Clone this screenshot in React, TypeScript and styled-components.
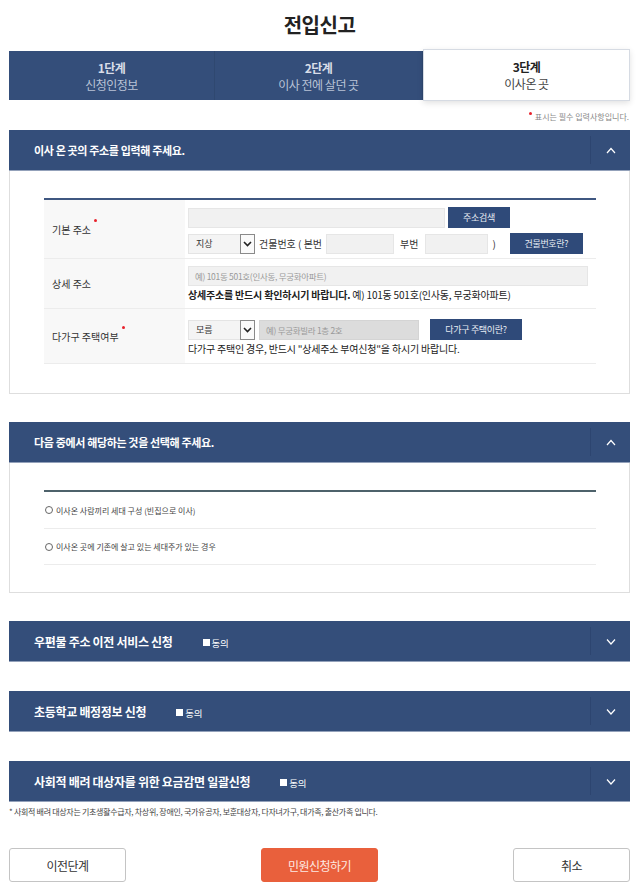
import styled, { createGlobalStyle } from 'styled-components';

const navy = '#344e7a';
const buttonNavy = '#2f4a79';

const GlobalStyle = createGlobalStyle`
  html, body {
    margin: 0;
    padding: 0;
    background: #fff;
  }
  body {
    font-family: 'Noto Sans CJK KR', 'Noto Sans', sans-serif;
    color: #222;
  }
  * {
    box-sizing: border-box;
  }
`;

const Page = styled.div`
  width: 640px;
  padding: 0 10px 0 9px;
`;

const Title = styled.h1`
  margin: 0;
  padding-top: 11px;
  height: 49px;
  text-align: center;
  font-size: 20px;
  line-height: 28px;
  font-weight: 700;
  letter-spacing: -0.5px;
  color: #222;
`;

const Steps = styled.div`
  display: grid;
  grid-template-columns: 206px 208px 1fr;
  height: 52px;
`;

const Step = styled.div<{ $active?: boolean }>`
  display: flex;
  flex-direction: column;
  align-items: center;
  justify-content: center;
  margin: ${(p) => (p.$active ? '0' : '2px 0 1px')};
  background: ${(p) => (p.$active ? '#fff' : navy)};
  border: ${(p) => (p.$active ? '1px solid #d6dbe3' : 'none')};
  border-right: ${(p) => (p.$active ? '1px solid #d6dbe3' : '1px solid #2f4870')};
  box-shadow: ${(p) => (p.$active ? '0 2px 6px rgba(0,0,0,0.12)' : 'none')};
  letter-spacing: -0.5px;
  line-height: 17px;

  strong {
    font-size: 12px;
    font-weight: 700;
    color: ${(p) => (p.$active ? '#222' : '#d8dde8')};
  }
  span {
    font-size: 12px;
    color: ${(p) => (p.$active ? '#444' : '#b9c3d6')};
  }
`;

const RequiredNote = styled.div`
  height: 29px;
  padding-top: 10px;
  text-align: right;
  font-size: 8px;
  line-height: 12px;
  color: #888;
  padding-right: 1px;
`;

const Dot = styled.i`
  display: inline-block;
  width: 3px;
  height: 3px;
  border-radius: 50%;
  background: #e8212b;
  vertical-align: top;
  margin: 1px 3px 0 0;
`;

const LabelDot = styled(Dot)`
  position: relative;
  top: -3px;
  margin: 0 0 0 3px;
`;

const Section = styled.section<{ $gap?: number }>`
  margin-bottom: ${(p) => (p.$gap ?? 28) + 'px'};
`;

const Header = styled.div`
  display: flex;
  align-items: center;
  height: 41px;
  background: ${navy};
  border-bottom: 1px solid #93a1ba;
  padding-left: 25px;
  color: #fff;
`;

// open panels use a slightly smaller title than the collapsed ones
const HeaderTitle = styled.h2<{ $open?: boolean }>`
  flex: 1;
  margin: 0;
  font-size: ${(p) => (p.$open ? '11px' : '12px')};
  font-weight: 700;
  letter-spacing: ${(p) => (p.$open ? '-0.35px' : '-0.3px')};
  display: flex;
  align-items: center;
`;

const Agree = styled.span`
  margin-left: 30px;
  font-size: 9.5px;
  font-weight: 400;
  letter-spacing: -0.3px;
  display: inline-flex;
  align-items: center;
  margin-top: 3px;

  &:before {
    content: '';
    width: 7px;
    height: 7px;
    background: #fff;
    margin-right: 2px;
  }
`;

const Toggle = styled.div`
  width: 40px;
  height: 28px;
  border-left: 1px solid #2d4570;
  display: flex;
  align-items: center;
  justify-content: center;
`;

const Body = styled.div<{ $pad: string }>`
  border: 1px solid #dedede;
  border-top: none;
  padding: ${(p) => p.$pad};
`;

const Table = styled.div<{ $line: string }>`
  border-top: 2px solid ${(p) => p.$line};
`;

const Row = styled.div<{ $h: number }>`
  display: grid;
  grid-template-columns: 141px 1fr;
  min-height: ${(p) => p.$h + 'px'};
  border-bottom: 1px solid #ececec;
`;

const Label = styled.div`
  background: #f8f8f8;
  display: flex;
  align-items: center;
  padding-left: 8px;
  font-size: 10px;
  color: #333;
`;

const Cell = styled.div<{ $pt: number }>`
  padding: ${(p) => p.$pt + 'px'} 0 0 3px;
  display: flex;
  flex-direction: column;
  gap: 5px;
`;

const Line = styled.div`
  display: flex;
  align-items: center;
  gap: 4px;
  font-size: 10px;
  color: #333;
`;

const Input = styled.div<{ $w: number; $dark?: boolean }>`
  width: ${(p) => p.$w + 'px'};
  height: 20px;
  background: ${(p) => (p.$dark ? '#dcdcdc' : '#f1f1f1')};
  border: 1px solid ${(p) => (p.$dark ? '#d4d4d4' : '#e6e6e6')};
  font-size: 8.5px;
  color: #999;
  padding-left: 6px;
  display: flex;
  align-items: center;
  letter-spacing: -0.3px;
`;

const Select = styled.div`
  width: 67px;
  height: 20px;
  background: #f4f4f4;
  border: 1px solid #e4e4e4;
  display: flex;
  align-items: center;
  justify-content: space-between;
  font-size: 9px;
  color: #333;
  padding-left: 7px;
`;

const Arrow = styled.span`
  width: 15px;
  height: 20px;
  margin: -1px -1px -1px 0;
  border: 1px solid #8a8a8a;
  background: #fafafa;
  display: flex;
  align-items: center;
  justify-content: center;
`;

const SmallButton = styled.div<{ $w: number; $ml?: number }>`
  width: ${(p) => p.$w + 'px'};
  height: 21px;
  margin-left: ${(p) => (p.$ml ?? 0) + 'px'};
  background: ${buttonNavy};
  color: #e8ecf3;
  font-size: 9px;
  letter-spacing: -0.3px;
  display: flex;
  align-items: center;
  justify-content: center;
`;

const Notice = styled.div`
  font-size: 10px;
  line-height: 14px;
  color: #222;
  letter-spacing: -0.2px;

  b {
    font-weight: 700;
  }
`;

const RadioRow = styled.label<{ $h?: number }>`
  display: flex;
  align-items: center;
  height: ${(p) => (p.$h ?? 37) + 'px'};
  border-bottom: 1px solid #ececec;
  font-size: 8px;
  color: #444;
  padding-left: 1px;
`;

const Radio = styled.span`
  width: 8px;
  height: 8px;
  border-radius: 50%;
  border: 1px solid #666;
  margin-right: 3px;
`;

const Footnote = styled.p`
  margin: -24px 0 0;
  font-size: 8px;
  line-height: 12px;
  color: #444;
  letter-spacing: -0.3px;
`;

const Footer = styled.div`
  display: flex;
  justify-content: space-between;
  margin-top: 30px;
`;

const FooterButton = styled.div<{ $primary?: boolean }>`
  width: 117px;
  height: 34px;
  border-radius: 3px;
  border: 1px solid ${(p) => (p.$primary ? '#e9603c' : '#c4c4c4')};
  background: ${(p) => (p.$primary ? '#e9603c' : '#fff')};
  color: ${(p) => (p.$primary ? '#fde9e2' : '#333')};
  font-size: 12px;
  letter-spacing: -0.5px;
  display: flex;
  align-items: center;
  justify-content: center;
`;

function Chevron({ up }: { up?: boolean }) {
  return (
    <svg width="10" height="7" viewBox="0 0 10 7">
      <polyline
        points={up ? '1,6 5,1.5 9,6' : '1,1.5 5,6 9,1.5'}
        fill="none"
        stroke="#fff"
        strokeWidth="1.2"
      />
    </svg>
  );
}

function SelectArrow() {
  return (
    <svg width="9" height="6" viewBox="0 0 9 6">
      <polyline points="1,1 4.5,4.5 8,1" fill="none" stroke="#222" strokeWidth="1.6" />
    </svg>
  );
}

function SectionHeader({ title, agree, open }: { title: string; agree?: boolean; open?: boolean }) {
  return (
    <Header>
      <HeaderTitle $open={open}>
        {title}
        {agree && <Agree>동의</Agree>}
      </HeaderTitle>
      <Toggle>
        <Chevron up={open} />
      </Toggle>
    </Header>
  );
}

function App() {
  return (
    <Page>
      <GlobalStyle />
      <Title>전입신고</Title>

      <Steps>
        <Step>
          <strong>1단계</strong>
          <span>신청인정보</span>
        </Step>
        <Step>
          <strong>2단계</strong>
          <span>이사 전에 살던 곳</span>
        </Step>
        <Step $active>
          <strong>3단계</strong>
          <span>이사온 곳</span>
        </Step>
      </Steps>

      <RequiredNote>
        <Dot />
        표시는 필수 입력사항입니다.
      </RequiredNote>

      <Section>
        <SectionHeader title="이사 온 곳의 주소를 입력해 주세요." open />
        <Body $pad="27px 33px 29px 34px">
          <Table $line="#3f5781">
            <Row $h={59}>
              <Label>
                <span>
                  기본 주소
                  <LabelDot />
                </span>
              </Label>
              <Cell $pt={7}>
                <Line style={{ gap: 3 }}>
                  <Input $w={257} />
                  <SmallButton $w={62}>주소검색</SmallButton>
                </Line>
                <Line>
                  <Select>
                    지상
                    <Arrow>
                      <SelectArrow />
                    </Arrow>
                  </Select>
                  <span>건물번호 ( 본번</span>
                  <Input $w={68} />
                  <span style={{ marginLeft: 2 }}>부번</span>
                  <Input $w={63} style={{ marginLeft: 3 }} />
                  <span>)</span>
                  <SmallButton $w={73} $ml={10}>
                    건물번호란?
                  </SmallButton>
                </Line>
              </Cell>
            </Row>
            <Row $h={50}>
              <Label>상세 주소</Label>
              <Cell $pt={7} style={{ gap: 2 }}>
                <Input $w={400}>예) 101동 501호(인사동, 무궁화아파트)</Input>
                <Notice>
                  <b>상세주소를 반드시 확인하시기 바랍니다.</b> 예) 101동 501호(인사동, 무궁화아파트)
                </Notice>
              </Cell>
            </Row>
            <Row $h={55}>
              <Label>
                <span>
                  다가구 주택여부
                  <LabelDot />
                </span>
              </Label>
              <Cell $pt={10} style={{ gap: 2 }}>
                <Line>
                  <Select>
                    모름
                    <Arrow>
                      <SelectArrow />
                    </Arrow>
                  </Select>
                  <Input $w={160} $dark>
                    예) 무궁화빌라 1층 2호
                  </Input>
                  <SmallButton $w={92} $ml={7}>
                    다가구 주택이란?
                  </SmallButton>
                </Line>
                <Notice>다가구 주택인 경우, 반드시 "상세주소 부여신청"을 하시기 바랍니다.</Notice>
              </Cell>
            </Row>
          </Table>
        </Body>
      </Section>

      <Section>
        <SectionHeader title="다음 중에서 해당하는 것을 선택해 주세요." open />
        <Body $pad="27px 33px 27px 34px">
          <Table $line="#4e626b">
            <RadioRow>
              <Radio />
              이사온 사람끼리 세대 구성 (빈집으로 이사)
            </RadioRow>
            <RadioRow $h={36}>
              <Radio />
              이사온 곳에 기존에 살고 있는 세대주가 있는 경우
            </RadioRow>
          </Table>
        </Body>
      </Section>

      <Section $gap={29}>
        <SectionHeader title="우편물 주소 이전 서비스 신청" agree />
      </Section>

      <Section $gap={29}>
        <SectionHeader title="초등학교 배정정보 신청" agree />
      </Section>

      <Section>
        <SectionHeader title="사회적 배려 대상자를 위한 요금감면 일괄신청" agree />
      </Section>

      <Footnote>
        * 사회적 배려 대상자는 기초생활수급자, 차상위, 장애인, 국가유공자, 보훈대상자, 다자녀가구, 대가족, 출산가족 입니다.
      </Footnote>

      <Footer>
        <FooterButton>이전단계</FooterButton>
        <FooterButton $primary>민원신청하기</FooterButton>
        <FooterButton>취소</FooterButton>
      </Footer>
    </Page>
  );
}

export default App;
